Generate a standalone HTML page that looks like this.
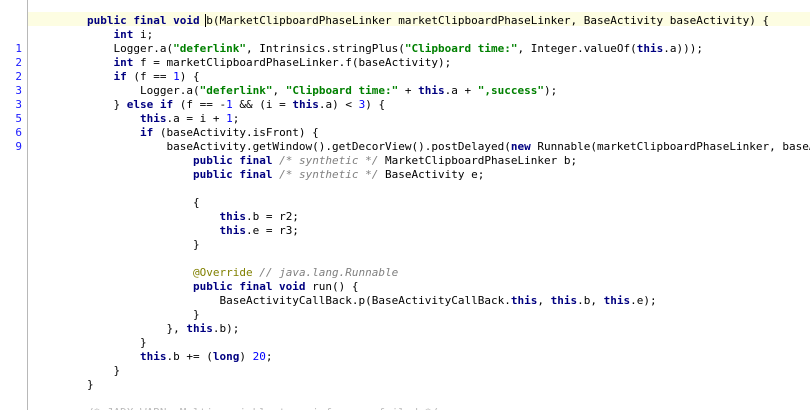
<!DOCTYPE html>
<html><head><meta charset="utf-8"><style>
html,body{margin:0;padding:0;background:#fff;width:810px;height:410px;overflow:hidden;position:relative}
.g{position:absolute;left:27px;top:0;width:1px;height:410px;background:#b8b8b8}
.hl{position:absolute;left:28px;top:12px;width:782px;height:14px;background:#fdfde2}
.w{position:absolute;left:87px;top:14px;width:723px;height:396px;overflow:hidden}
pre{margin:0;font-family:"DejaVu Sans Mono","Liberation Mono",monospace;font-size:11px;line-height:14px;color:#000;white-space:pre}
.n{position:absolute;left:0;width:22px;top:42px;margin:0;font-family:"DejaVu Sans Mono",monospace;font-size:11px;line-height:14px;color:#1a1aff;text-align:right;white-space:pre}
b{color:#000080;font-weight:bold}
s{color:#008000;font-weight:bold;text-decoration:none}
u{color:#0000ff;text-decoration:none}
i{color:#808080;font-style:italic}
em{color:#808000;font-style:normal}
.c{border-left:1px solid #000;margin-left:-1px}
.f{color:#bbb}
</style></head><body>
<div class="hl"></div>
<div class="g"></div>
<pre class="n">1
2
2
3
3
5
6
9</pre>
<div class="w"><pre><b>public final void</b> <span class="c">b</span>(MarketClipboardPhaseLinker marketClipboardPhaseLinker, BaseActivity baseActivity) {
    <b>int</b> i;
    Logger.a(<s>"deferlink"</s>, Intrinsics.stringPlus(<s>"Clipboard time:"</s>, Integer.valueOf(<b>this</b>.a)));
    <b>int</b> f = marketClipboardPhaseLinker.f(baseActivity);
    <b>if</b> (f == <u>1</u>) {
        Logger.a(<s>"deferlink"</s>, <s>"Clipboard time:"</s> + <b>this</b>.a + <s>",success"</s>);
    } <b>else if</b> (f == -<u>1</u> &amp;&amp; (i = <b>this</b>.a) &lt; <u>3</u>) {
        <b>this</b>.a = i + <u>1</u>;
        <b>if</b> (baseActivity.isFront) {
            baseActivity.getWindow().getDecorView().postDelayed(<b>new</b> Runnable(marketClipboardPhaseLinker, baseActivity) {
                <b>public final</b> <i>/* synthetic */</i> MarketClipboardPhaseLinker b;
                <b>public final</b> <i>/* synthetic */</i> BaseActivity e;

                {
                    <b>this</b>.b = r2;
                    <b>this</b>.e = r3;
                }

                <em>@Override</em> <i>// java.lang.Runnable</i>
                <b>public final void</b> run() {
                    BaseActivityCallBack.p(BaseActivityCallBack.<b>this</b>, <b>this</b>.b, <b>this</b>.e);
                }
            }, <b>this</b>.b);
        }
        <b>this</b>.b += (<b>long</b>) <u>20</u>;
    }
}

<span class="f">/* JADX WARN: Multi-variable type inference failed */</span></pre></div>
</body></html>
